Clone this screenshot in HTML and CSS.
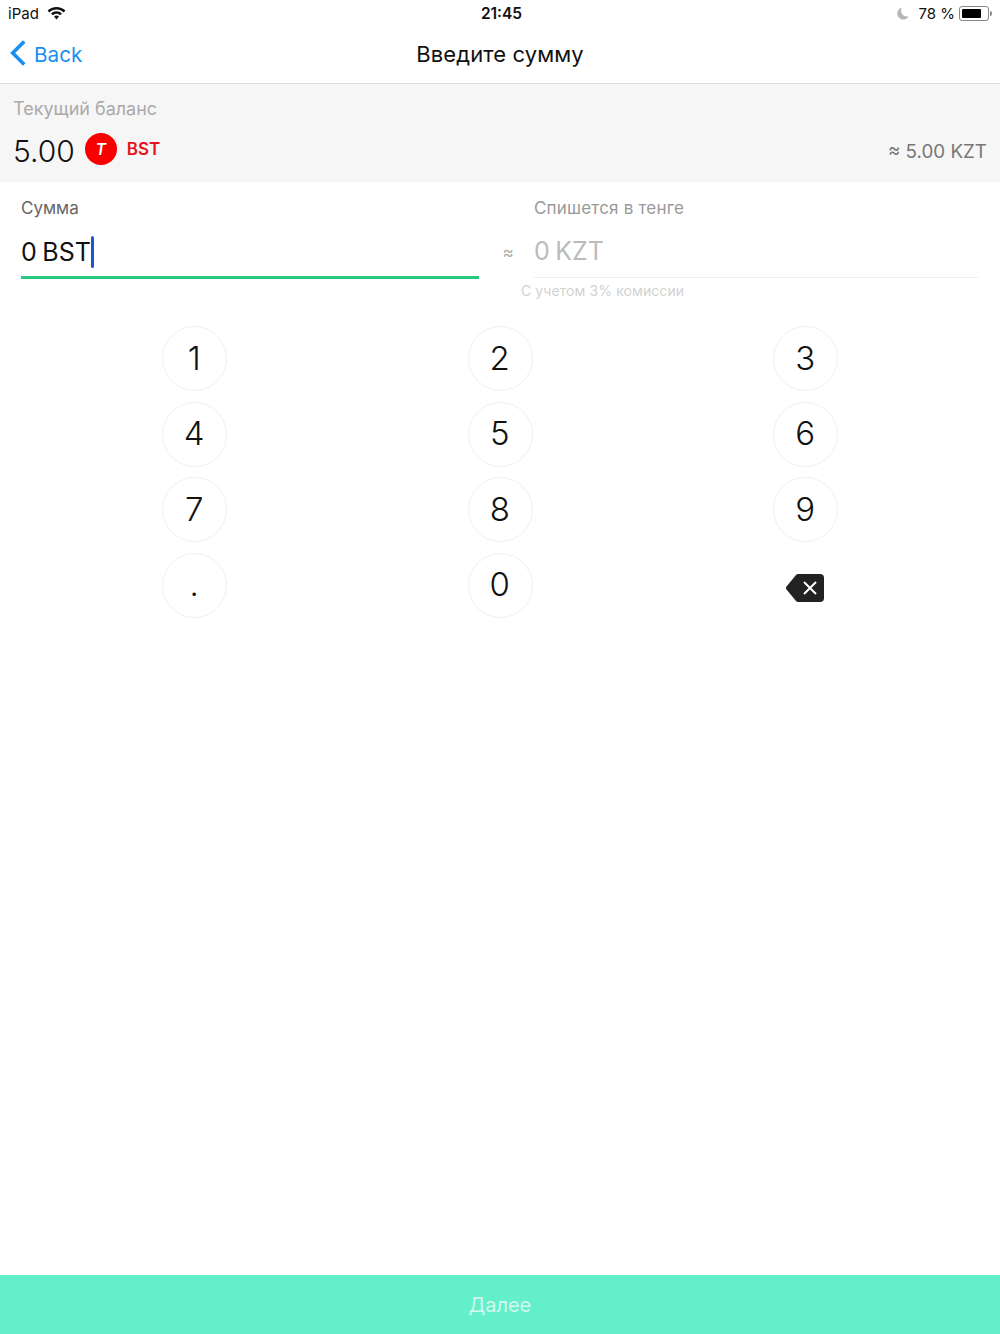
FILE: index.html
```html
<!DOCTYPE html>
<html lang="ru">
<head>
    <meta charset="UTF-8">
    <meta name="viewport" content="width=device-width, initial-scale=1">
    <title>Введите сумму</title>
    <link rel="stylesheet" href="styles.css">
</head>
<body>
    <div class="status-bar">
        <div class="status-left">
            <span>iPad</span>
            <svg class="wifi" width="19" height="14" viewBox="0 0 19 14">
                <path d="M9.500 1C6 1 3 2.300.6 4.600l1.700 1.900C4.200 4.600 6.700 3.500 9.500 3.500s5.300 1.100 7.200 3l1.700-1.900C16 2.300 13 1 9.500 1z" fill="#111"/>
                <path d="M9.500 5.200c-2.100 0-4 .8-5.400 2.200l1.700 1.900c1-1 2.300-1.600 3.700-1.600s2.700.6 3.700 1.600l1.700-1.900C13.500 6 11.600 5.200 9.500 5.200z" fill="#111"/>
                <path d="M9.500 9.600c-1 0-1.900.4-2.500 1l2.500 2.900 2.500-2.900c-.6-.6-1.500-1-2.500-1z" fill="#111"/>
            </svg>
        </div>
        <div class="status-time">21:45</div>
        <div class="status-right">
            <svg class="moon" width="12" height="13" viewBox="0 0 12 13">
                <path d="M5 .6A6 6 0 1 0 11.600 9.200 5.800 5.800 0 0 1 5 .6z" fill="#b5b5b5"/>
            </svg>
            <span>78 %</span>
            <div class="battery"><div class="battery-level"></div></div>
            <div class="battery-tip"></div>
        </div>
    </div>

    <div class="nav-bar">
        <div class="back">
            <svg width="18" height="28" viewBox="0 0 18 28">
                <path d="M15.200 2.500L3.700 14l11.500 11.500" fill="none" stroke="#1b8ff0" stroke-width="3.600"/>
            </svg>
            <span class="back-text">Back</span>
        </div>
        <h1>Введите сумму</h1>
    </div>

    <div class="balance">
        <div class="balance-label">Текущий баланс</div>
        <div class="balance-row">
            <span class="balance-value">5.00</span>
            <span class="token-icon">T</span>
            <span class="token-name">BST</span>
            <span class="balance-kzt">≈ 5.00 KZT</span>
        </div>
    </div>

    <div class="fields">
        <div class="field field-main">
            <div class="field-label">Сумма</div>
            <div class="field-input active">0 BST<span class="caret"></span></div>
        </div>
        <div class="approx">≈</div>
        <div class="field field-side">
            <div class="field-label muted">Спишется в тенге</div>
            <div class="field-input disabled">0 KZT</div>
        </div>
    </div>
    <div class="hint">С учетом 3% комиссии</div>

    <div class="keypad">
        <div class="key">1</div>
        <div class="key">2</div>
        <div class="key">3</div>
        <div class="key">4</div>
        <div class="key">5</div>
        <div class="key">6</div>
        <div class="key">7</div>
        <div class="key">8</div>
        <div class="key">9</div>
        <div class="key key-dot">.</div>
        <div class="key">0</div>
        <div class="key key-del">
            <svg width="40" height="30" viewBox="0 0 40 30">
                <path d="M13 1h22a4 4 0 0 1 4 4v20a4 4 0 0 1-4 4H13a3 3 0 0 1-2-1L1.500 16.500a2.400 2.400 0 0 1 0-3L11 2a3 3 0 0 1 2-1z" fill="#222"/>
                <path d="M19 9l12 12M31 9L19 21" stroke="#fff" stroke-width="2" fill="none"/>
            </svg>
        </div>
    </div>

    <button class="btn">Далее</button>
</body>
</html>
```

FILE: styles.css
```css
* {
    box-sizing: border-box;
}
body {
    margin: 0;
    height: 1334px;
    display: flex;
    flex-direction: column;
    font-family: Inter, "Liberation Sans", sans-serif;
    background-color: #fff;
    color: #111;
    overflow: hidden;
}

/* status bar */
.status-bar {
    height: 27px;
    padding: 0 8px;
    display: flex;
    align-items: center;
    justify-content: space-between;
    font-size: 15px;
}
.status-left {
    width: 200px;
    display: flex;
    align-items: center;
    gap: 8px;
}
.status-left .wifi {
    margin-top: -2px;
}
.status-time {
    margin-left: 3px;
    font-size: 15.5px;
    font-weight: 600;
}
.status-right {
    width: 200px;
    display: flex;
    align-items: center;
    justify-content: flex-end;
}
.moon {
    margin-right: 9px;
}
.battery {
    width: 30px;
    height: 15px;
    margin-left: 4px;
    padding: 2px;
    border: 1px solid #888;
    border-radius: 3px;
}
.battery-level {
    width: 78%;
    height: 100%;
    background-color: #000;
    border-radius: 1px;
}
.battery-tip {
    width: 2px;
    height: 5px;
    margin-left: 1px;
    background-color: #888;
    border-radius: 0 2px 2px 0;
}

/* nav */
.nav-bar {
    height: 57px;
    padding-bottom: 3px;
    position: relative;
    display: flex;
    align-items: center;
    justify-content: center;
    border-bottom: 1px solid #dcdcdc;
}
.nav-bar h1 {
    margin: 0;
    font-size: 22px;
    font-weight: 400;
    letter-spacing: 0.1px;
}
.back {
    position: absolute;
    left: 9px;
    top: 12px;
    display: flex;
    align-items: center;
    gap: 7px;
    font-size: 20.7px;
    color: #1b8ff0;
}
.back-text {
    margin-top: 2px;
}

/* balance */
.balance {
    height: 98px;
    padding: 14px 13px 0 13px;
    background-color: #f6f6f6;
}
.balance-label {
    font-size: 18px;
    line-height: 22px;
    color: #aaa;
}
.balance-row {
    margin-top: 13px;
    display: flex;
    align-items: center;
}
.balance-value {
    font-size: 30px;
    font-weight: 300;
}
.token-icon {
    width: 32px;
    height: 32px;
    margin-left: 10px;
    margin-top: -4px;
    display: flex;
    align-items: center;
    justify-content: center;
    border-radius: 50%;
    background-color: #f80000;
    color: #fff;
    font-size: 16px;
    font-weight: 600;
    font-style: italic;
}
.token-name {
    margin-left: 10px;
    margin-top: -5px;
    font-size: 17px;
    font-weight: 600;
    color: #e5141c;
}
.balance-kzt {
    margin-left: auto;
    font-size: 18.8px;
    color: #777;
}

/* fields */
.fields {
    padding: 15px 22px 0 21px;
    display: flex;
    align-items: flex-start;
}
.field-main {
    width: 458px;
}
.field-side {
    flex: 1;
}
.field-label {
    font-size: 17px;
    line-height: 22px;
    color: #666;
}
.field-label.muted {
    color: #999;
    letter-spacing: 0.2px;
}
.field-input {
    height: 51px;
    margin-top: 9px;
    display: flex;
    align-items: center;
    font-size: 25px;
    word-spacing: -1.5px;
}
.field-input.active {
    border-bottom: 3px solid #25c97f;
}
.field-input.disabled {
    height: 50px;
    padding-bottom: 3px;
    border-bottom: 1px solid #eee;
    color: #bbb;
}
.caret {
    width: 3px;
    height: 32px;
    margin-left: 0;
    background-color: #1a56d8;
    border-radius: 2px;
}
.approx {
    width: 55px;
    margin-top: 45px;
    padding-left: 3px;
    text-align: center;
    font-size: 17px;
    color: #aaa;
}
.hint {
    margin-top: 2px;
    padding-left: 521px;
    font-size: 14px;
    line-height: 20px;
    letter-spacing: 0.1px;
    color: #d2d2d2;
}

/* keypad */
.keypad {
    margin-top: 25px;
    padding: 0 41.5px 0 42px;
    display: grid;
    grid-template-columns: repeat(3, 1fr);
    row-gap: 10.5px;
    justify-items: center;
}
.key {
    width: 65px;
    height: 65px;
    padding: 0 1px 2px 0;
    display: flex;
    align-items: center;
    justify-content: center;
    border: 1px solid #f0f0f0;
    border-radius: 50%;
    font-size: 33px;
    font-weight: 300;
}
.key-del {
    border: none;
    padding: 6px 2px 0 0;
}

.btn {
    margin-top: auto;
    height: 59px;
    width: 100%;
    border: none;
    background-color: #64efcb;
    color: #d3f8ee;
    font-family: inherit;
    font-size: 20px;
}
```
